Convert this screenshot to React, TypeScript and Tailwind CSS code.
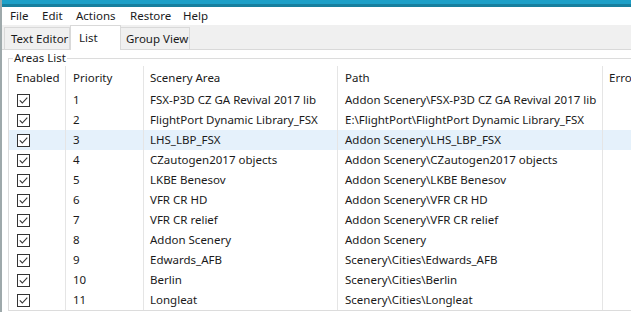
import React from "react";

const rows: [number, string, string][] = [
  [1, "FSX-P3D CZ GA Revival 2017 lib", "Addon Scenery\\FSX-P3D CZ GA Revival 2017 lib"],
  [2, "FlightPort Dynamic Library_FSX", "E:\\FlightPort\\FlightPort Dynamic Library_FSX"],
  [3, "LHS_LBP_FSX", "Addon Scenery\\LHS_LBP_FSX"],
  [4, "CZautogen2017 objects", "Addon Scenery\\CZautogen2017 objects"],
  [5, "LKBE Benesov", "Addon Scenery\\LKBE Benesov"],
  [6, "VFR CR HD", "Addon Scenery\\VFR CR HD"],
  [7, "VFR CR relief", "Addon Scenery\\VFR CR relief"],
  [8, "Addon Scenery", "Addon Scenery"],
  [9, "Edwards_AFB", "Scenery\\Cities\\Edwards_AFB"],
  [10, "Berlin", "Scenery\\Cities\\Berlin"],
  [11, "Longleat", "Scenery\\Cities\\Longleat"],
];

function Check() {
  return (
    <svg width="13" height="13" viewBox="0 0 13 13" className="block">
      <rect x="0.5" y="0.5" width="12" height="12" fill="white" stroke="#333" strokeWidth="1" />
      <path d="M2.8 6.4 L5.3 9 L10.3 3.6" fill="none" stroke="#333" strokeWidth="1.1" />
    </svg>
  );
}

export default function App() {
  return (
    <div className="w-[631px] h-[312px] overflow-hidden flex bg-white font-['Noto_Sans',sans-serif] text-[11.5px] text-[#1a1a1a]">
      <div className="w-[2px] bg-[#9ea9ab] shrink-0" />
      <div className="flex-1 flex flex-col min-w-0">
        <div className="h-[4px] shrink-0 bg-[#1da0c8]" />
        <div className="h-[3px] shrink-0 bg-[#17809f]" />
        <div className="h-[18px] shrink-0 flex items-center bg-white leading-none whitespace-nowrap">
          <span className="w-[40px] pl-[8px]">File</span>
          <span className="w-[34px]">Edit</span>
          <span className="w-[54px]">Actions</span>
          <span className="w-[53px]">Restore</span>
          <span>Help</span>
        </div>
        <div className="h-[25px] shrink-0 flex items-end bg-[#f0f0f0] border-b border-[#d9d9d9] pl-[2px] whitespace-nowrap">
          <div className="h-[22px] w-[66px] flex items-center pl-[6px] border border-b-0 border-[#d9d9d9] bg-[#f0f0f0]">
            Text Editor
          </div>
          <div className="h-[25px] w-[51px] -mb-px relative flex items-start pt-[3px] pl-[8px] bg-white border border-b-0 border-[#d9d9d9]">
            List
          </div>
          <div className="h-[22px] w-[69px] flex items-center pl-[5px] border border-b-0 border-l-0 border-[#d9d9d9] bg-[#f0f0f0]">
            Group View
          </div>
        </div>
        <div className="flex-1 pl-[6px] bg-white">
          <fieldset className="border border-[#dcdcdc]">
            <legend className="ml-[4px] px-[1px] leading-[16px]">Areas List</legend>
            <div className="grid grid-cols-[56px_78px_194px_265px_1fr]">
              <div className="h-[24px] flex items-center pl-[7px]">Enabled</div>
              <div className="h-[24px] flex items-center pl-[7px] border-l border-[#e5e5e5]">Priority</div>
              <div className="h-[24px] flex items-center pl-[6px] border-l border-[#e5e5e5]">Scenery Area</div>
              <div className="h-[24px] flex items-center pl-[7px] border-l border-[#e5e5e5]">Path</div>
              <div className="h-[24px] flex items-center pl-[6px] border-l border-[#e5e5e5] whitespace-nowrap">Error</div>
              {rows.map(([p, name, path]) => {
                const bg = p === 3 ? "bg-[#e5f1fb]" : "bg-white";
                return (
                  <React.Fragment key={p}>
                    <div className={`h-[20px] flex items-center pl-[8px] ${bg}`}>
                      <Check />
                    </div>
                    <div className={`h-[20px] flex items-center pl-[7px] border-l border-[#e5e5e5] ${bg}`}>{p}</div>
                    <div className={`h-[20px] flex items-center pl-[6px] border-l border-[#e5e5e5] whitespace-nowrap overflow-hidden ${bg}`}>{name}</div>
                    <div className={`h-[20px] flex items-center pl-[7px] border-l border-[#e5e5e5] whitespace-nowrap overflow-hidden ${bg}`}>{path}</div>
                    <div className={`h-[20px] border-l border-[#e5e5e5] ${bg}`} />
                  </React.Fragment>
                );
              })}
            </div>
          </fieldset>
        </div>
      </div>
    </div>
  );
}
